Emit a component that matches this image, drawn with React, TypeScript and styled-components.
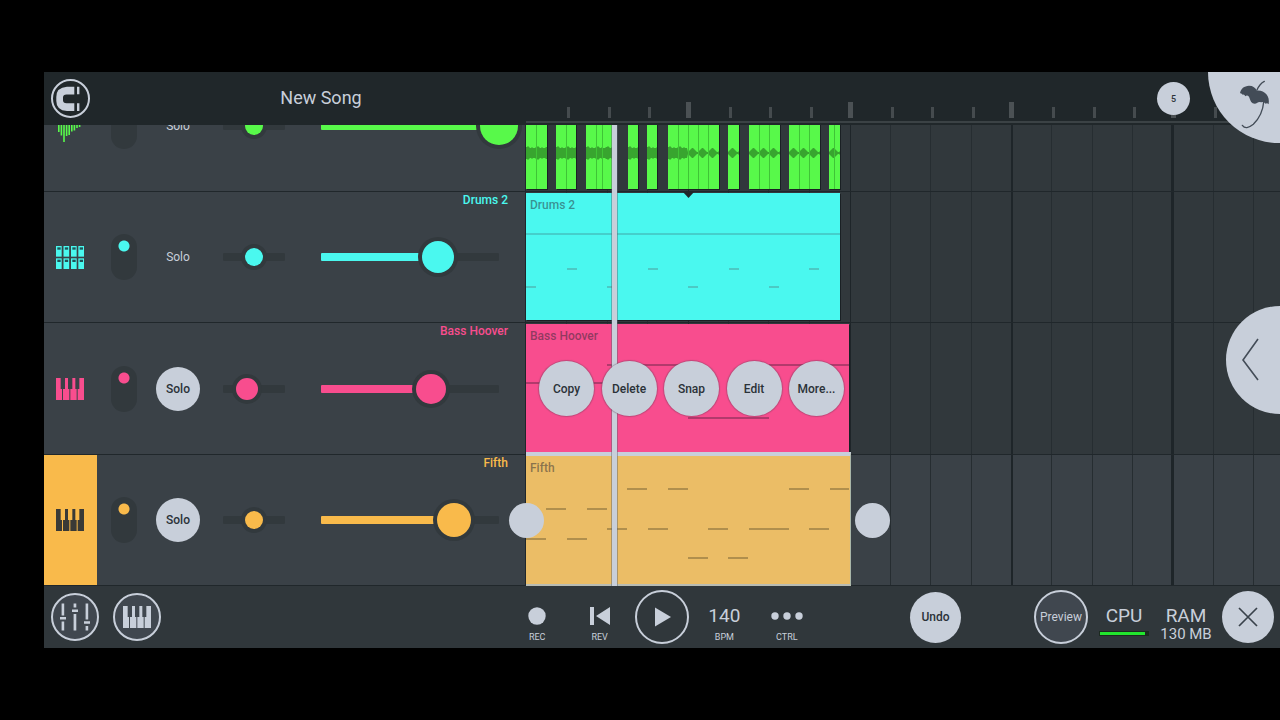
import React from "react";
import styled, { createGlobalStyle, css } from "styled-components";

const c = {
  header: "#20272a",
  panel: "#3a4147",
  lane: "#31383c",
  laneActive: "#3a4147",
  footer: "#30373b",
  well: "#32393d",
  line: "#20272b",
  light: "#c8cfda",
  ink: "#2b3238",
  green: "#58f94a",
  cyan: "#4af8ef",
  pink: "#f84d8e",
  orange: "#f9ba4b",
  orangeClip: "#ebbd66",
};

const Global = createGlobalStyle`
  *, *::before, *::after { box-sizing: border-box; }
  body { margin: 0; background: #000; font-family: Roboto, "Liberation Sans", sans-serif; color: ${c.light}; }
  button { font: inherit; color: inherit; border: 0; padding: 0; background: none; cursor: pointer; }
  svg { display: block; }
`;

const Screen = styled.div`
  height: 100vh;
  padding: 72px 0 72px 44px;
  background: #000;
`;

const Frame = styled.main`
  position: relative;
  height: 100%;
  display: flex;
  flex-direction: column;
  overflow: hidden;
`;

/* ---------- header ---------- */

const Header = styled.header`
  display: flex;
  flex: none;
  height: 53px;
  background: ${c.header};
`;

const HeaderLeft = styled.div`
  display: flex;
  align-items: center;
  gap: 26px;
  width: 482px;
  padding-left: 7px;
`;

const Title = styled.h1`
  flex: 1;
  margin: 0;
  padding-bottom: 2px;
  text-align: center;
  font-size: 18px;
  line-height: 24px;
  font-weight: 400;
`;

const Ruler = styled.div`
  position: relative;
  flex: 1;
  min-width: 0;
  overflow: hidden;
`;

const BarBadge = styled.div`
  position: absolute;
  left: 631px;
  top: 10px;
  display: grid;
  place-items: center;
  width: 33px;
  height: 33px;
  border-radius: 50%;
  background: ${c.light};
  color: ${c.ink};
  font-size: 9px;
  line-height: 12px;
  font-weight: 500;
`;

const CornerButton = styled.button`
  position: absolute;
  top: 0;
  right: 0;
  z-index: 5;
  width: 72px;
  height: 71px;
  border-radius: 0 0 0 72px;
  background: ${c.light};
`;

const DrawerButton = styled.button`
  position: absolute;
  top: 50%;
  right: 0;
  z-index: 5;
  width: 54px;
  height: 108px;
  margin-top: -54px;
  border-radius: 54px 0 0 54px;
  background: ${c.light};
`;

/* ---------- tracks ---------- */

const Body = styled.section`
  display: flex;
  flex: 1;
  align-items: flex-end;
  min-height: 0;
  overflow: hidden;
`;

const trackRows = css`
  display: grid;
  grid-template-rows: 131px 131px 132px 131px;
`;

const ChannelList = styled.div`
  ${trackRows}
  flex: none;
  width: 482px;
  border-right: 1px solid ${c.line};
  background: ${c.panel};
`;

const Channel = styled.div`
  display: grid;
  border-bottom: 1px solid ${c.line};
`;

const ChannelName = styled.span<{ $color: string }>`
  grid-area: 1 / 1;
  justify-self: end;
  align-self: start;
  padding-right: 17px;
  color: ${(p) => p.$color};
  font-size: 12px;
  line-height: 16px;
  font-weight: 500;
`;

const Controls = styled.div`
  grid-area: 1 / 1;
  display: flex;
  align-items: center;
`;

const Instrument = styled.button<{ $color: string; $active?: boolean }>`
  display: grid;
  place-items: center;
  align-self: stretch;
  width: 53px;
  padding-right: 1px;
  background: ${(p) => (p.$active ? p.$color : "transparent")};
  color: ${(p) => (p.$active ? "#3a3a36" : p.$color)};
`;

const Mute = styled.input<{ $color: string }>`
  appearance: none;
  width: 26px;
  height: 46px;
  margin: 0 19px 0 14px;
  border-radius: 13px;
  background: radial-gradient(circle at 13px 12px, ${(p) => p.$color} 5px, transparent 6px) ${c.well};
`;

const Solo = styled.button<{ $on?: boolean }>`
  width: 44px;
  height: 44px;
  border-radius: 50%;
  background: ${(p) => (p.$on ? c.light : "transparent")};
  color: ${(p) => (p.$on ? c.ink : c.light)};
  font-size: 12px;
  line-height: 16px;
  font-weight: ${(p) => (p.$on ? 500 : 400)};
`;

const SliderTrack = styled.div<{ $width: number; $gap: number; $fill: number; $color: string }>`
  display: flex;
  align-items: center;
  flex: none;
  width: ${(p) => p.$width}px;
  height: 8px;
  margin-left: ${(p) => p.$gap}px;
  border-radius: 1px;
  background: linear-gradient(to right, ${(p) => p.$color} ${(p) => p.$fill}px, ${c.well} ${(p) => p.$fill}px);
`;

const SliderInput = styled.input<{ $width: number; $thumb: number; $color: string }>`
  appearance: none;
  flex: none;
  width: ${(p) => p.$width + p.$thumb}px;
  height: ${(p) => p.$thumb}px;
  margin: 0 ${(p) => -p.$thumb / 2}px;
  background: transparent;
  &::-webkit-slider-thumb {
    appearance: none;
    width: ${(p) => p.$thumb}px;
    height: ${(p) => p.$thumb}px;
    border-radius: 50%;
    background: ${(p) => p.$color};
    box-shadow: 0 0 0 4px ${c.well};
  }
`;

/* ---------- arrangement ---------- */

const Arrangement = styled.div`
  ${trackRows}
  position: relative;
  flex: 1;
  min-width: 0;
`;

const Lane = styled.div<{ $active?: boolean }>`
  position: relative;
  border-bottom: 1px solid ${c.line};
  background: ${(p) => (p.$active ? c.laneActive : c.lane)};
`;

const GridLines = styled.svg`
  position: absolute;
  inset: 0;
  width: 100%;
  height: 100%;
`;

const Clip = styled.div<{ $left?: number; $width: number; $color: string; $selected?: boolean }>`
  position: absolute;
  top: 1px;
  bottom: 2px;
  left: ${(p) => p.$left ?? 0}px;
  width: ${(p) => p.$width}px;
  overflow: hidden;
  background: ${(p) => p.$color};
  ${(p) =>
    p.$selected
      ? css`
          top: -3px;
          bottom: -1px;
          border-top: 4px solid ${c.light};
          border-bottom: 2px solid #b9bcb2;
          border-right: 1px solid #a9b6a8;
        `
      : css`
          box-shadow: 1px 1px 0 #1a2024;
        `}
`;

const ClipName = styled.span`
  position: relative;
  display: block;
  padding: 4px 0 0 4px;
  color: rgba(40, 40, 50, 0.5);
  font-size: 12px;
  line-height: 16px;
  font-weight: 500;
`;

const Notes = styled.svg`
  position: absolute;
  top: 0;
  left: 0;
`;

const Playhead = styled.div`
  position: absolute;
  top: 0;
  bottom: 0;
  left: 86px;
  z-index: 2;
  width: 5px;
  background: ${c.light};
  box-shadow: 0 0 0 1px rgba(90, 100, 110, 0.45);
`;

const Marker = styled.svg`
  position: absolute;
  left: 157px;
  top: 0;
`;

const ClipMenu = styled.div`
  position: absolute;
  top: 38px;
  left: 13px;
  z-index: 3;
  display: flex;
  justify-content: space-between;
  width: 305px;
`;

const ClipAction = styled.button`
  width: 55px;
  height: 55px;
  border-radius: 50%;
  background: ${c.light};
  color: ${c.ink};
  box-shadow: 0 0 1px 1px rgba(90, 60, 80, 0.35);
  font-size: 12px;
  line-height: 16px;
  font-weight: 500;
`;

const Handle = styled.button<{ $left: number }>`
  position: absolute;
  top: 48px;
  left: ${(p) => p.$left}px;
  z-index: 3;
  width: 35px;
  height: 35px;
  border-radius: 50%;
  background: ${c.light};
`;

/* ---------- footer ---------- */

const Footer = styled.footer`
  display: flex;
  flex: none;
  align-items: center;
  height: 62px;
  background: ${c.footer};
`;

const FooterLeft = styled.div`
  display: flex;
  gap: 14px;
  width: 462px;
  padding-left: 7px;
`;

const Round = styled.button<{ $size: number; $filled?: boolean }>`
  display: grid;
  place-items: center;
  flex: none;
  width: ${(p) => p.$size}px;
  height: ${(p) => p.$size}px;
  padding-bottom: 1px;
  border-radius: 50%;
  border: ${(p) => (p.$filled ? "0" : `2px solid ${c.light}`)};
  background: ${(p) => (p.$filled ? c.light : "transparent")};
  color: ${(p) => (p.$filled ? c.ink : c.light)};
  font-size: 12px;
  line-height: 16px;
  font-weight: ${(p) => (p.$filled ? 500 : 400)};
`;

const Shaded = styled(Round)`
  background: #40474f;
`;

const UndoButton = styled(Round)`
  margin-right: 73px;
`;

const Transport = styled.div`
  display: grid;
  grid-template-columns: repeat(5, 1fr);
  place-items: center;
  width: 312px;
`;

const TransportButton = styled.button`
  display: flex;
  flex-direction: column;
  align-items: center;
  padding-top: 12px;
`;

const TransportFace = styled.span`
  display: grid;
  place-items: center;
  height: 26px;
  font-size: 19px;
  line-height: 24px;
`;

const TransportLabel = styled.span`
  padding-top: 2px;
  font-size: 9px;
  line-height: 12px;
`;

const FooterRight = styled.div`
  display: flex;
  align-items: center;
  margin-left: auto;
  padding-right: 6px;
`;

const Meters = styled.div`
  display: flex;
  padding: 9px 5px 0 5px;
`;

const Meter = styled.div`
  display: flex;
  flex-direction: column;
  align-items: center;
  width: 62px;
  font-size: 19px;
  line-height: 24px;
`;

const MeterBar = styled.div`
  width: 50px;
  height: 5px;
  margin-top: 3px;
  border: 1px solid #1c2a20;
  background: linear-gradient(to right, #22e62e 45px, #1c2a20 45px);
`;

const MeterValue = styled.span`
  font-size: 15px;
  line-height: 12px;
  white-space: nowrap;
`;

/* ---------- icons ---------- */

const PianoIcon = () => (
  <svg width="28" height="22" viewBox="0 0 84 66" fill="currentColor" aria-hidden>
    <path d="M0 0h14v33h4v33H0z M27 0h9v33h4v33H21V33h6z M49 0h9v33h4v33H43V33h6z M70 0h14v66H65V33h5z" />
  </svg>
);

const DrumIcon = () => (
  <svg width="28" height="23" viewBox="0 0 84 69" aria-hidden>
    {[0, 22.5, 45, 67].map((x) =>
      [0, 37].map((y) => (
        <g key={`${x}-${y}`}>
          <rect x={x} y={y} width="17" height="32" fill="currentColor" />
          <rect x={x + 4} y={y + 4} width="10" height="7" fill="#1f5458" />
        </g>
      ))
    )}
  </svg>
);

const WaveIcon = () => (
  <svg width="28" height="32" viewBox="0 0 28 32" fill="currentColor" aria-hidden>
    {[12, 19, 32, 20, 18, 11, 9, 4, 2].map((h, i) => (
      <rect key={i} x={2 + i * 2.6} y={16 - h / 2} width="1.6" height={h} />
    ))}
  </svg>
);

const MagnetIcon = () => (
  <svg width="36" height="36" viewBox="-18 -18 36 36" fill="currentColor" aria-hidden>
    <path d="M3.3 -12.2H-4Q-14.7 -11.5 -14.7 -2V2Q-14.7 11.5 -4 12H3.3V4.2H-4.5Q-8 4-8 1.5V-1.5Q-8 -4.2-4.5 -4.4H3.3z M6 -12.2h2.4v7.4H6z M6 4.2h2.4v7.8H6z" />
  </svg>
);

const FadersIcon = () => (
  <svg width="30" height="28" viewBox="-15 -14 30 28" fill="currentColor" aria-hidden>
    <path d="M-13.4 -13.5h2.6v12h-2.6z M-15 0h6v2.6h-6z M-13.4 4.4h2.6v9h-2.6z M-1.4 -13.5h2.7v4h-2.7z M-3 -7.5h6v2.6h-6z M-1.4 -3h2.7v16.4h-2.7z M10.6 -13.5h2.6v16h-2.6z M9 4.2h6v2.6h-6z M10.6 9h2.6v4.4h-2.6z" />
  </svg>
);

const UmbrellaLogo = () => (
  <svg width="72" height="71" viewBox="504 6 216 213" aria-hidden>
    <path
      fill="#434c57"
      d="M600 70C602 55 613 48 627 47C639 47 647 53 651 62C672 60 691 77 686 103Q682 98 677 101Q671 94 664 97Q657 94 652 98Q646 103 638 100C631 96 630 86 627 80Q621 73 616 79Q613 72 608 74Q604 68 600 70z"
    />
    <path
      fill="none"
      stroke="#434c57"
      strokeWidth="4"
      strokeLinecap="round"
      d="M651 60Q659 41 673 34M671 96C669 122 655 148 640 163Q618 181 607 166"
    />
  </svg>
);

/* ---------- data ---------- */

const gridX = [41, 82, 122, 162, 203, 243, 284, 324, 365, 405, 446, 485, 526, 567, 607, 647, 688, 728];
const isBar = (x: number) => [162, 324, 485, 647].includes(x);

const channels = [
  { name: "Drums", color: c.green, icon: <WaveIcon />, pan: 31, panThumb: 18, vol: 178, volThumb: 38 },
  { name: "Drums 2", color: c.cyan, icon: <DrumIcon />, pan: 31, panThumb: 18, vol: 117, volThumb: 32 },
  { name: "Bass Hoover", color: c.pink, icon: <PianoIcon />, pan: 24, panThumb: 22, vol: 110, volThumb: 30, solo: true },
  { name: "Fifth", color: c.orange, icon: <PianoIcon />, pan: 31, panThumb: 18, vol: 133, volThumb: 34, solo: true, active: true },
];

type Slice = { x: number; w: number; cuts: number[]; dense: number };
const slices: Slice[] = [
  { x: 0, w: 21, cuts: [10], dense: 22 },
  { x: 30, w: 20, cuts: [10], dense: 21 },
  { x: 60, w: 27, cuts: [10, 16], dense: 28 },
  { x: 102, w: 10, cuts: [], dense: 11 },
  { x: 121, w: 10, cuts: [], dense: 11 },
  { x: 142, w: 51, cuts: [10, 20, 30, 40], dense: 20 },
  { x: 202, w: 11, cuts: [], dense: 0 },
  { x: 223, w: 31, cuts: [10, 20], dense: 0 },
  { x: 263, w: 31, cuts: [10, 20], dense: 0 },
  { x: 303, w: 11, cuts: [5], dense: 0 },
];

const wavePath = ({ w, dense }: Slice) => {
  const top: string[] = [];
  const bottom: string[] = [];
  for (let x = 0; x <= w; x++) {
    const jitter = [6, 6, 7, 6, 5, 5, 6, 5, 5, 5][x % 10];
    const blob = [1, 2, 3, 4, 5, 5, 4, 3, 2, 1][(x - dense + 30) % 10];
    const a = x < dense ? jitter : blob;
    top.push(`${x} ${91 - a}`);
    bottom.unshift(`${x} ${91 + a}`);
  }
  return `M${top.join("L")}L${bottom.join("L")}z`;
};

const drumNotes = [[0, 94, 10], [81, 94, 10], [162, 94, 10], [243, 94, 10], [41, 76, 10], [122, 76, 10], [203, 76, 10], [283, 76, 10]];
const bassNotes = [[0, 59, 81], [81, 41, 81], [162, 94, 81], [243, 41, 81]];
const fifthNotes = [
  [0, 83, 20], [20, 53, 20], [41, 83, 20], [61, 53, 20], [81, 73, 20], [101, 33, 20], [122, 73, 20], [142, 33, 20],
  [162, 102, 20], [182, 73, 20], [202, 102, 20], [223, 73, 40], [263, 33, 20], [283, 73, 20], [304, 33, 19],
];

const NoteBars = ({ notes, fill, height }: { notes: number[][]; fill: string; height: number }) => (
  <Notes width="324" height="130" aria-hidden>
    {notes.map(([x, y, w]) => (
      <rect key={`${x}-${y}`} x={x} y={y - 1} width={w} height={height} fill={fill} />
    ))}
  </Notes>
);

type SliderProps = { label: string; width: number; gap: number; value: number; thumb: number; color: string; filled?: boolean };
const Slider = ({ label, width, gap, value, thumb, color, filled }: SliderProps) => (
  <SliderTrack $width={width} $gap={gap} $fill={filled ? value : 0} $color={color}>
    <SliderInput type="range" aria-label={label} min={0} max={width} defaultValue={value} $width={width} $thumb={thumb} $color={color} />
  </SliderTrack>
);

const Lines = () => (
  <GridLines aria-hidden>
    {gridX.map((x) => (
      <rect key={x} x={x === 647 ? x - 2 : x === 324 || isBar(x) ? x : x - 1} y="0" width={x === 647 ? 3 : x === 485 ? 2 : 1} height="100%" fill={isBar(x) ? "#1e2529" : "#262d31"} />
    ))}
  </GridLines>
);

export default function App() {
  return (
    <Screen>
      <Global />
      <Frame>
        <Header>
          <HeaderLeft>
            <Round $size={39} aria-label="Snap to grid">
              <MagnetIcon />
            </Round>
            <Title>New Song</Title>
          </HeaderLeft>
          <Ruler>
            <svg width="100%" height="53" aria-hidden>
              <rect x="0" y="49" width="100%" height="2" fill="#3b4245" />
              {gridX.map((x) =>
                isBar(x) ? (
                  <rect key={x} x={x - 2} y="30" width="5" height="16" fill="#4b5154" />
                ) : (
                  <rect key={x} x={x} y="35" width="3" height="11" fill="#454b4e" />
                )
              )}
            </svg>
            <BarBadge>5</BarBadge>
          </Ruler>
        </Header>

        <Body>
          <ChannelList>
            {channels.map((ch) => (
              <Channel key={ch.name}>
                <Controls>
                  <Instrument $color={ch.color} $active={ch.active} aria-label={`${ch.name} instrument`}>
                    {ch.icon}
                  </Instrument>
                  <Mute type="checkbox" defaultChecked $color={ch.color} aria-label={`${ch.name} on`} />
                  <Solo $on={ch.solo}>Solo</Solo>
                  <Slider label={`${ch.name} pan`} width={62} gap={23} value={ch.pan} thumb={ch.panThumb} color={ch.color} />
                  <Slider label={`${ch.name} volume`} width={178} gap={36} value={ch.vol} thumb={ch.volThumb} color={ch.color} filled />
                </Controls>
                {ch.color !== c.green && <ChannelName $color={ch.color}>{ch.name}</ChannelName>}
              </Channel>
            ))}
          </ChannelList>

          <Arrangement>
            <Lane>
              <Lines />
              {slices.map((s) => (
                <Clip key={s.x} $left={s.x} $width={s.w} $color={c.green}>
                  <Notes width={s.w} height="128" aria-hidden>
                    <path d={wavePath(s)} fill="#38a52f" />
                    {s.cuts.map((x) => (
                      <rect key={x} x={x} y="0" width="1" height="128" fill="#3fc436" />
                    ))}
                  </Notes>
                </Clip>
              ))}
            </Lane>
            <Lane>
              <Lines />
              <Clip $width={314} $color={c.cyan}>
                <Notes width="314" height="128" aria-hidden>
                  <rect x="0" y="40" width="314" height="2" fill="#45cfcb" />
                </Notes>
                <NoteBars notes={drumNotes} fill="#4cc9c4" height={2} />
                <ClipName>Drums 2</ClipName>
              </Clip>
              <Marker width="11" height="7" aria-hidden>
                <path d="M0 0H11L5.500 6z" fill={c.header} />
              </Marker>
            </Lane>
            <Lane>
              <Lines />
              <Clip $width={323} $color={c.pink}>
                <NoteBars notes={bassNotes} fill="#b23a6c" height={2} />
                <ClipName>Bass Hoover</ClipName>
              </Clip>
              <ClipMenu>
                {["Copy", "Delete", "Snap", "Edit", "More..."].map((label) => (
                  <ClipAction key={label}>{label}</ClipAction>
                ))}
              </ClipMenu>
            </Lane>
            <Lane $active>
              <Lines />
              <Clip $width={325} $color={c.orangeClip} $selected>
                <NoteBars notes={fifthNotes} fill="#b08f4d" height={2} />
                <ClipName>Fifth</ClipName>
              </Clip>
              <Handle $left={-17} aria-label="Clip start" />
              <Handle $left={329} aria-label="Clip end" />
            </Lane>
            <Playhead />
          </Arrangement>
        </Body>

        <Footer>
          <FooterLeft>
            <Shaded $size={48} aria-label="Mixer">
              <FadersIcon />
            </Shaded>
            <Shaded $size={48} aria-label="Keyboard">
              <PianoIcon />
            </Shaded>
          </FooterLeft>
          <Transport>
            <TransportButton>
              <TransportFace>
                <svg width="18" height="18" aria-hidden>
                  <circle cx="9" cy="9" r="8.700" fill={c.light} />
                </svg>
              </TransportFace>
              <TransportLabel>REC</TransportLabel>
            </TransportButton>
            <TransportButton>
              <TransportFace>
                <svg width="20" height="18" fill={c.light} aria-hidden>
                  <path d="M0 0H4V18H0z M20 0V18L6 9z" />
                </svg>
              </TransportFace>
              <TransportLabel>REV</TransportLabel>
            </TransportButton>
            <Round $size={54} aria-label="Play">
              <svg width="18" height="20" fill={c.light} aria-hidden>
                <path d="M2 0.500L18 10L2 19.500z" />
              </svg>
            </Round>
            <TransportButton>
              <TransportFace>140</TransportFace>
              <TransportLabel>BPM</TransportLabel>
            </TransportButton>
            <TransportButton>
              <TransportFace>
                <svg width="32" height="8" fill={c.light} aria-hidden>
                  <circle cx="4" cy="4" r="3.700" />
                  <circle cx="16" cy="4" r="3.700" />
                  <circle cx="28" cy="4" r="3.700" />
                </svg>
              </TransportFace>
              <TransportLabel>CTRL</TransportLabel>
            </TransportButton>
          </Transport>
          <FooterRight>
            <UndoButton $size={51} $filled>
              Undo
            </UndoButton>
            <Shaded $size={54}>Preview</Shaded>
            <Meters>
              <Meter>
                CPU
                <MeterBar />
              </Meter>
              <Meter>
                RAM
                <MeterValue>130 MB</MeterValue>
              </Meter>
            </Meters>
            <Round $size={52} $filled aria-label="Close">
              <svg width="20" height="20" stroke="#39424b" strokeWidth="1.700" aria-hidden>
                <path d="M1 1L19 19M19 1L1 19" />
              </svg>
            </Round>
          </FooterRight>
        </Footer>

        <CornerButton aria-label="Home">
          <UmbrellaLogo />
        </CornerButton>
        <DrawerButton aria-label="Open panel">
          <svg width="54" height="108" fill="none" stroke="#434c57" strokeWidth="1.600" aria-hidden>
            <path d="M32 33L17 54L32 74" />
          </svg>
        </DrawerButton>
      </Frame>
    </Screen>
  );
}
